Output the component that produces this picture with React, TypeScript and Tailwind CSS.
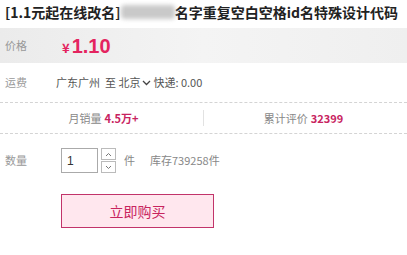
const cjk = "font-['Microsoft_YaHei','Noto_Sans_CJK_SC',sans-serif]";

function Chevron({ up }: { up?: boolean }) {
  return (
    <svg width="7" height="5" viewBox="0 0 7 5" className="block">
      <polyline
        points={up ? "1,4 3.5,1.5 6,4" : "1,1 3.5,3.5 6,1"}
        fill="none"
        stroke="#777"
        strokeWidth="1"
      />
    </svg>
  );
}

export default function App() {
  return (
    <div className={`w-[407px] h-[255px] bg-white overflow-hidden ${cjk}`}>
      {/* title */}
      <div className="h-[28px] pl-[5px] pt-[2px] flex items-start whitespace-nowrap text-[14px] leading-[20px] font-bold text-[#222]">
        <span>[1.1元起在线改名]</span>
        <span className="inline-block w-[54px] h-[14px] mt-[3px] bg-[#c9c9c9] blur-[2px] rounded-sm" />
        <span>名字重复空白空格id名特殊设计代码</span>
      </div>

      {/* price */}
      <div className="h-[35px] flex items-center pl-[5px] bg-gradient-to-r from-[#ebebeb] via-[#f4f4f4] to-[#efefef]">
        <span className="w-[57px] text-[11px] text-[#999]">价格</span>
        <span className="text-[#e4245f] font-bold flex items-baseline">
          <span className="text-[13px] mr-[2px]">¥</span>
          <span className="text-[20px] font-['Liberation_Sans',sans-serif]">1.10</span>
        </span>
      </div>

      {/* shipping */}
      <div className="h-[40px] flex items-center pl-[5px] border-b border-dashed border-[#d4d4d4]">
        <span className="w-[51px] text-[11px] text-[#999]">运费</span>
        <span className="flex items-center text-[11px] text-[#555] whitespace-nowrap">
          广东广州&nbsp;&nbsp;至&nbsp;北京
          <svg width="9" height="6" viewBox="0 0 9 6" className="mx-[2px]">
            <polyline points="1,1 4.5,4.5 8,1" fill="none" stroke="#444" strokeWidth="1.3" />
          </svg>
          快递: 0.00
        </span>
      </div>

      {/* stats */}
      <div className="h-[31px] flex items-center border-b border-dashed border-[#d4d4d4] text-[11px]">
        <div className="flex-1 flex justify-center gap-[3px] pl-[4px]">
          <span className="text-[#888]">月销量</span>
          <span className="font-bold text-[#c8235f]">4.5万+</span>
        </div>
        <div className="w-px h-[16px] bg-[#e2e2e2]" />
        <div className="flex-1 flex justify-center gap-[3px] pr-[4px]">
          <span className="text-[#888]">累计评价</span>
          <span className="font-bold text-[#c8235f]">32399</span>
        </div>
      </div>

      {/* quantity */}
      <div className="flex items-center pl-[5px] mt-[14px]">
        <span className="w-[56px] text-[11px] text-[#999]">数量</span>
        <div className="w-[37px] h-[25px] border border-[#aaa] flex items-center pl-[5px] text-[12px] text-[#333] font-['Liberation_Sans',sans-serif]">
          1
        </div>
        <div className="ml-[3px] flex flex-col gap-[1px]">
          <div className="w-[15px] h-[12px] border border-[#bbb] flex items-center justify-center">
            <Chevron up />
          </div>
          <div className="w-[15px] h-[12px] border border-[#bbb] flex items-center justify-center">
            <Chevron />
          </div>
        </div>
        <span className="ml-[8px] text-[11px] text-[#888]">件</span>
        <span className="ml-[15px] text-[11px] text-[#888]">库存739258件</span>
      </div>

      {/* buy */}
      <div className="pl-[61px] mt-[21px]">
        <button className="w-[153px] h-[34px] border border-[#c2346a] bg-[#ffe7ee] text-[14px] text-[#c8245e]">
          立即购买
        </button>
      </div>
    </div>
  );
}
